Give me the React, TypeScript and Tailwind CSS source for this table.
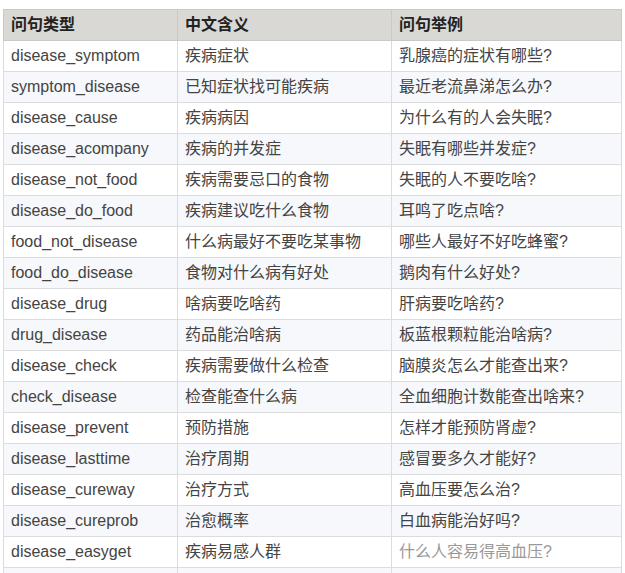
const rows: [string, string, string][] = [
  ['disease_symptom', '疾病症状', '乳腺癌的症状有哪些?'],
  ['symptom_disease', '已知症状找可能疾病', '最近老流鼻涕怎么办?'],
  ['disease_cause', '疾病病因', '为什么有的人会失眠?'],
  ['disease_acompany', '疾病的并发症', '失眠有哪些并发症?'],
  ['disease_not_food', '疾病需要忌口的食物', '失眠的人不要吃啥?'],
  ['disease_do_food', '疾病建议吃什么食物', '耳鸣了吃点啥?'],
  ['food_not_disease', '什么病最好不要吃某事物', '哪些人最好不好吃蜂蜜?'],
  ['food_do_disease', '食物对什么病有好处', '鹅肉有什么好处?'],
  ['disease_drug', '啥病要吃啥药', '肝病要吃啥药?'],
  ['drug_disease', '药品能治啥病', '板蓝根颗粒能治啥病?'],
  ['disease_check', '疾病需要做什么检查', '脑膜炎怎么才能查出来?'],
  ['check_disease', '检查能查什么病', '全血细胞计数能查出啥来?'],
  ['disease_prevent', '预防措施', '怎样才能预防肾虚?'],
  ['disease_lasttime', '治疗周期', '感冒要多久才能好?'],
  ['disease_cureway', '治疗方式', '高血压要怎么治?'],
  ['disease_cureprob', '治愈概率', '白血病能治好吗?'],
  ['disease_easyget', '疾病易感人群', '什么人容易得高血压?'],
  ['', '', ''],
];

export default function App() {
  return (
    <div className="w-[625px] h-[573px] overflow-hidden bg-white pt-[9px] pl-[3px] font-['Liberation_Sans','Noto_Sans_CJK_SC',sans-serif] text-[16px] text-[#444]">
      <table className="w-[618px] border-collapse table-fixed">
        <colgroup>
          <col className="w-[174px]" />
          <col className="w-[214px]" />
          <col className="w-[230px]" />
        </colgroup>
        <thead>
          <tr className="h-[31px] bg-[#dad8d4]">
            <th className="border border-[#c9c9c9] px-[7px] text-left font-bold text-[#222]">问句类型</th>
            <th className="border border-[#c9c9c9] px-[7px] text-left font-bold text-[#222]">中文含义</th>
            <th className="border border-[#c9c9c9] px-[7px] text-left font-bold text-[#222]">问句举例</th>
          </tr>
        </thead>
        <tbody>
          {rows.map((r, i) => (
            <tr key={i} className={`h-[31px] ${i % 2 === 1 ? 'bg-[#f6f8fb]' : 'bg-white'}`}>
              <td className="border border-[#dcdcdc] px-[7px] whitespace-nowrap">{r[0]}</td>
              <td className="border border-[#dcdcdc] px-[7px] whitespace-nowrap">{r[1]}</td>
              <td className={`border border-[#dcdcdc] px-[7px] whitespace-nowrap ${i === 16 ? 'text-[#999]' : ''}`}>{r[2]}</td>
            </tr>
          ))}
        </tbody>
      </table>
    </div>
  );
}
